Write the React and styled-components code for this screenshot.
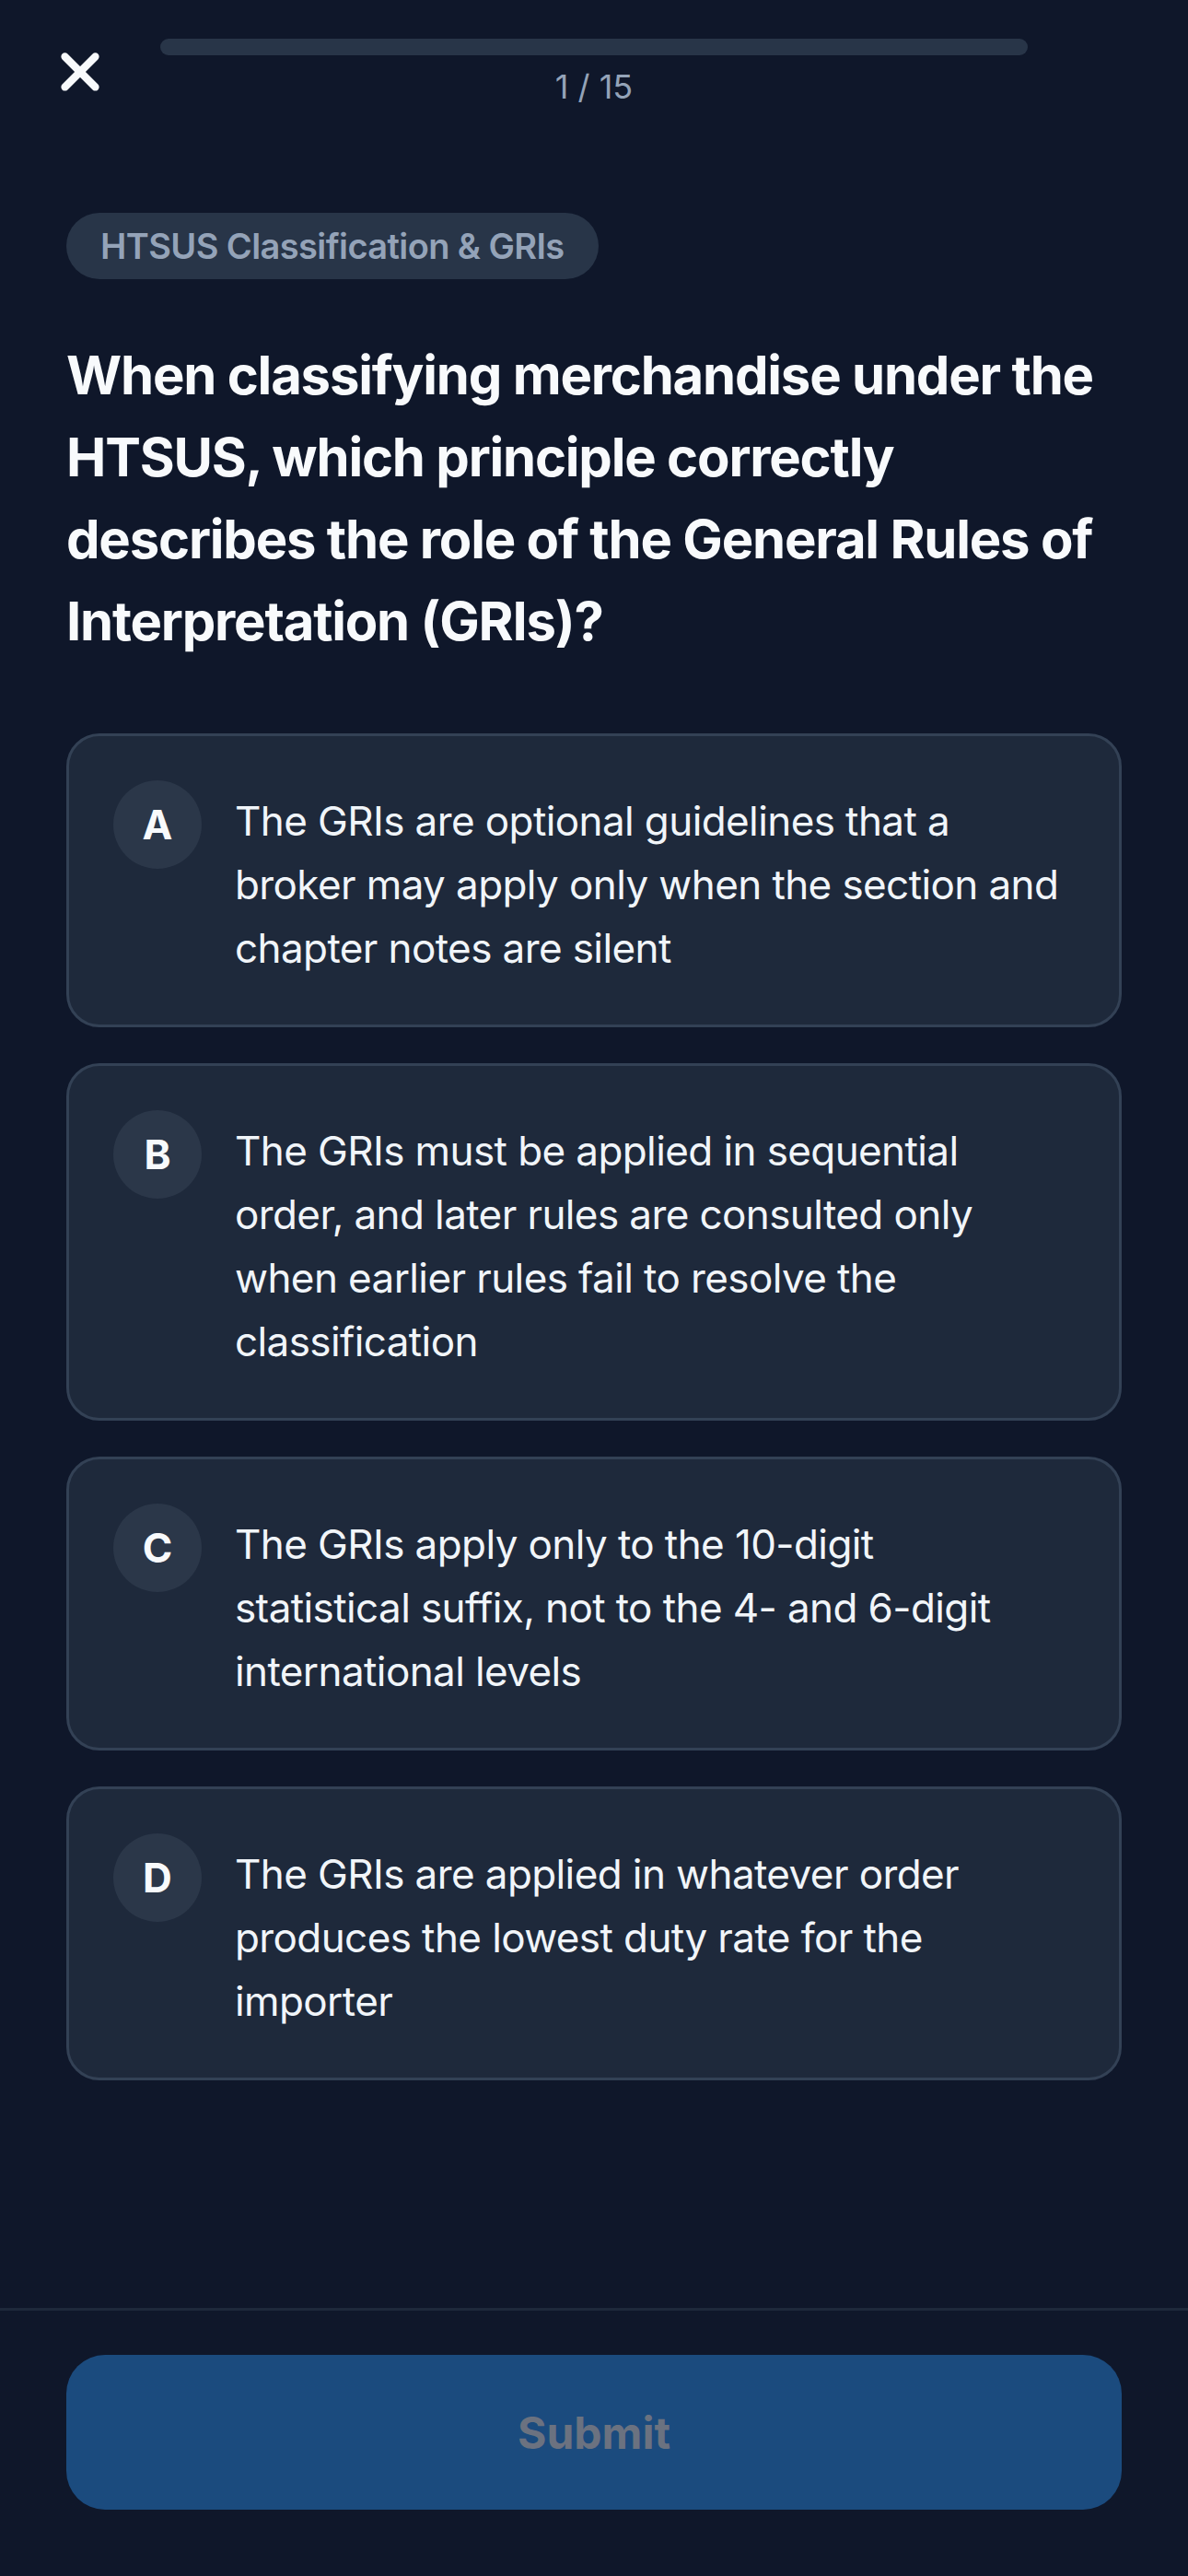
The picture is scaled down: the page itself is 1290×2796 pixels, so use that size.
import React from 'react';
import styled, { createGlobalStyle } from 'styled-components';

const GlobalStyle = createGlobalStyle`
  html, body {
    margin: 0;
    padding: 0;
    background: #0f172a;
  }
  body {
    font-family: Inter, 'Noto Sans', 'Liberation Sans', sans-serif;
    color: #f8fafc;
    -webkit-font-smoothing: antialiased;
  }
  * {
    box-sizing: border-box;
  }
`;

const Screen = styled.div`
  min-height: 100vh;
  display: flex;
  flex-direction: column;
  background: #0f172a;
`;

const Header = styled.header`
  display: grid;
  grid-template-columns: 72px 1fr 72px;
  column-gap: 51px;
  padding: 42px 51px 0;
  align-items: start;
`;

const CloseButton = styled.button`
  width: 72px;
  height: 72px;
  padding: 0;
  border: 0;
  background: transparent;
  color: #f8fafc;
  display: flex;
  align-items: center;
  justify-content: center;
  cursor: pointer;
`;

const Progress = styled.div`
  display: flex;
  flex-direction: column;
  align-items: center;
`;

const Track = styled.div`
  width: 100%;
  height: 18px;
  border-radius: 9px;
  background: #283548;
  overflow: hidden;
`;

const Fill = styled.div`
  height: 100%;
  background: #3b82f6;
  border-radius: 9px;
`;

const Counter = styled.div`
  margin-top: 13px;
  font-size: 36px;
  line-height: 43px;
  color: #94a3b8;
`;

const Main = styled.main`
  flex: 1;
  padding: 115px 72px 72px;
  display: flex;
  flex-direction: column;
  align-items: flex-start;
`;

const Chip = styled.span`
  display: inline-flex;
  align-items: center;
  height: 72px;
  padding: 0 37px;
  border-radius: 36px;
  background: #283548;
  color: #94a3b8;
  font-size: 38px;
  font-weight: 600;
  letter-spacing: -0.6px;
`;

const Question = styled.h1`
  margin: 60px 0 0;
  font-size: 58px;
  line-height: 89px;
  font-weight: 700;
  letter-spacing: -1.2px;
  color: #f8fafc;
`;

const Options = styled.div`
  margin-top: 77px;
  width: 100%;
  display: flex;
  flex-direction: column;
  gap: 39px;
`;

const OptionCard = styled.button`
  width: 100%;
  display: flex;
  align-items: flex-start;
  gap: 36px;
  padding: 48px;
  border: 3px solid ${(p) => (p.$selected ? '#3b82f6' : '#334155')};
  border-radius: 36px;
  background: #1e293b;
  text-align: left;
  font: inherit;
  color: inherit;
  cursor: pointer;
`;

const Badge = styled.span`
  flex-shrink: 0;
  width: 96px;
  height: 96px;
  border-radius: 50%;
  background: #2b3749;
  display: flex;
  align-items: center;
  justify-content: center;
  font-size: 44px;
  font-weight: 700;
  color: #f8fafc;
`;

const OptionText = styled.span`
  padding-top: 10px;
  font-size: 44px;
  line-height: 69px;
  letter-spacing: -0.6px;
  color: #f1f5f9;
`;

const Footer = styled.footer`
  border-top: 3px solid #1e293b;
  padding: 48px 72px 72px;
`;

const SubmitButton = styled.button`
  width: 100%;
  height: 168px;
  border: 0;
  border-radius: 42px;
  background: #1b4b7e;
  color: #6b7280;
  font: inherit;
  font-size: 48px;
  font-weight: 700;
  cursor: not-allowed;
`;

const CloseIcon = () => (
  <svg width="72" height="72" viewBox="0 0 24 24" fill="none" stroke="currentColor" strokeWidth="2.75" strokeLinecap="round">
    <path d="M17.5 6.5 6.5 17.5" />
    <path d="M6.5 6.5l11 11" />
  </svg>
);

// non-breaking space keeps "statistical suffix," together, as the reference wraps it
const options = [
  { key: 'A', text: 'The GRIs are optional guidelines that a broker may apply only when the section and chapter notes are silent' },
  { key: 'B', text: 'The GRIs must be applied in sequential order, and later rules are consulted only when earlier rules fail to resolve the classification' },
  { key: 'C', text: 'The GRIs apply only to the 10-digit statistical\u00A0suffix, not to the 4- and 6-digit international levels' },
  { key: 'D', text: 'The GRIs are applied in whatever order produces the lowest duty rate for the importer' },
];

const App = () => {
  const current = 1;
  const total = 15;

  return (
    <>
      <GlobalStyle />
      <Screen>
        <Header>
          <CloseButton aria-label="Close">
            <CloseIcon />
          </CloseButton>
          <Progress>
            <Track>
              <Fill style={{ width: `${((current - 1) / total) * 100}%` }} />
            </Track>
            <Counter>
              {current} / {total}
            </Counter>
          </Progress>
          <div />
        </Header>

        <Main>
          <Chip>HTSUS Classification &amp; GRIs</Chip>
          <Question>
            When classifying merchandise under the HTSUS, which principle correctly describes the role of the General Rules of Interpretation (GRIs)?
          </Question>
          <Options>
            {options.map((o) => (
              <OptionCard key={o.key}>
                <Badge>{o.key}</Badge>
                <OptionText>{o.text}</OptionText>
              </OptionCard>
            ))}
          </Options>
        </Main>

        <Footer>
          <SubmitButton disabled>Submit</SubmitButton>
        </Footer>
      </Screen>
    </>
  );
};

export default App;
